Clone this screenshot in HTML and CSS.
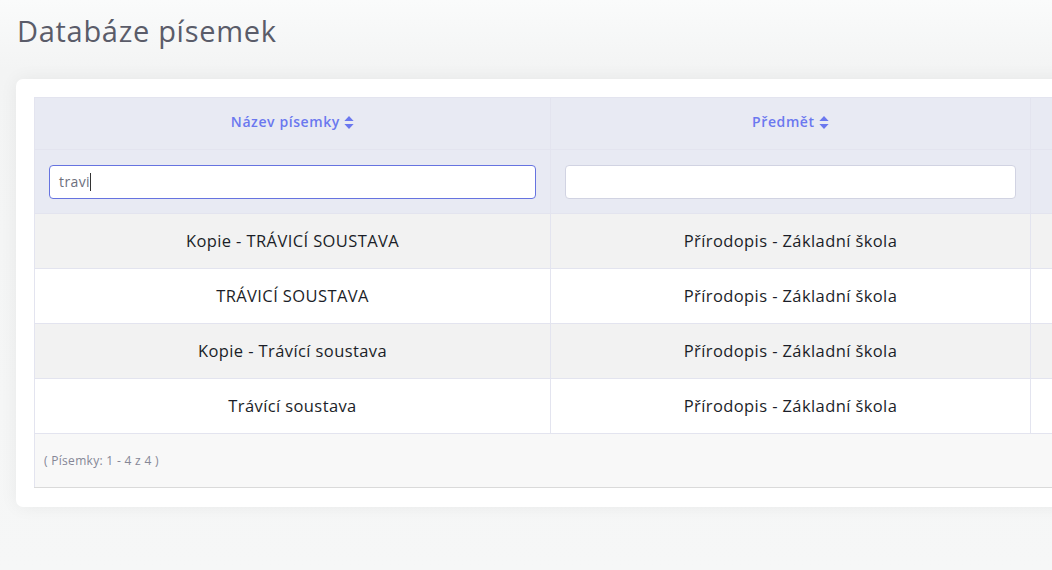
FILE: index.html
```html
<!DOCTYPE html>
<html>
<head>
  <meta charset="utf-8">
  <title>Databáze písemek</title>
  <link rel="stylesheet" href="styles.css">
</head>
<body>
  <h1 class="page-title">Databáze písemek</h1>
  <div class="card">
    <table class="grid">
      <colgroup>
        <col class="col-name">
        <col class="col-subject">
        <col class="col-rest">
      </colgroup>
      <thead>
        <tr class="head-row">
          <th>Název písemky <span class="sort"><svg viewBox="0 0 10 14" width="10" height="13"><path d="M5 0 L10 5.5 H0 Z M5 14 L10 8.5 H0 Z" fill="currentColor"/></svg></span></th>
          <th>Předmět <span class="sort"><svg viewBox="0 0 10 14" width="10" height="13"><path d="M5 0 L10 5.5 H0 Z M5 14 L10 8.5 H0 Z" fill="currentColor"/></svg></span></th>
          <th></th>
        </tr>
        <tr class="filter-row">
          <td><div class="filter focused">travi<span class="caret"></span></div></td>
          <td><div class="filter"></div></td>
          <td></td>
        </tr>
      </thead>
      <tbody>
        <tr class="odd"><td>Kopie - TRÁVICÍ SOUSTAVA</td><td>Přírodopis - Základní škola</td><td></td></tr>
        <tr><td>TRÁVICÍ SOUSTAVA</td><td>Přírodopis - Základní škola</td><td></td></tr>
        <tr class="odd"><td>Kopie - Trávící soustava</td><td>Přírodopis - Základní škola</td><td></td></tr>
        <tr><td>Trávící soustava</td><td>Přírodopis - Základní škola</td><td></td></tr>
      </tbody>
      <tfoot>
        <tr><td colspan="3" class="pager">( Písemky: 1 - 4 z 4 )</td></tr>
      </tfoot>
    </table>
  </div>
</body>
</html>
```

FILE: styles.css
```css
html, body {
  height: 100%;
}
body {
  margin: 0;
  padding: 0 0 0 16px;
  background: linear-gradient(#fafbfb, #f3f4f4 70px, #f6f7f7 100%);
  font-family: 'Open Sans', 'Noto Sans', sans-serif;
  color: #1b1e28;
  overflow: hidden;
}
.page-title {
  margin: 0;
  padding: 11px 0 0 1px;
  height: 65px;
  box-sizing: border-box;
  font-weight: normal;
  font-size: 29px;
  color: #5a5c69;
  letter-spacing: 0.7px;
}
.card {
  width: 1100px;
  margin-top: 14px;
  padding: 18px 18px 19px 18px;
  background: #fff;
  border-radius: 7px;
  box-shadow: 0 0 18px rgba(0, 0, 0, 0.06);
}
.grid {
  width: 1060px;
  border-collapse: collapse;
  table-layout: fixed;
  border: 1px solid #e3e4ef;
  font-size: 16.5px;
  letter-spacing: 0.4px;
}
.col-name { width: 516px; }
.col-subject { width: 480px; }
.grid th, .grid td {
  border: 1px solid #e3e4ef;
  text-align: center;
  padding: 0;
}
.head-row th {
  height: 52px;
  padding-bottom: 3px;
  box-sizing: border-box;
  background: #e8eaf3;
  color: #6b78ef;
  font-size: 14px;
  font-weight: 600;
  letter-spacing: 0.6px;
}
.sort {
  display: inline-block;
  vertical-align: -2px;
}
.filter-row td {
  height: 63px;
  background: #e8eaf3;
  padding: 0 14px;
}
.filter {
  height: 32px;
  background: #fff;
  border: 1px solid #d1d3e2;
  border-radius: 4px;
  text-align: left;
  padding: 0 9px;
  font-size: 14px;
  line-height: 32px;
  color: #6e707e;
}
.filter.focused {
  border-color: #6673e0;
}
.caret {
  display: inline-block;
  width: 1px;
  height: 18px;
  background: #333;
  vertical-align: -4px;
}
.grid tbody td {
  height: 52px;
  padding-bottom: 2px;
}
tbody tr.odd td {
  background: #f2f2f2;
}
tfoot td.pager {
  height: 53px;
  background: #f8f8f8;
  border-bottom: 1px solid #dadada;
  text-align: left;
  padding-left: 9px;
  font-size: 12px;
  letter-spacing: 0.3px;
  color: #858796;
}
```
